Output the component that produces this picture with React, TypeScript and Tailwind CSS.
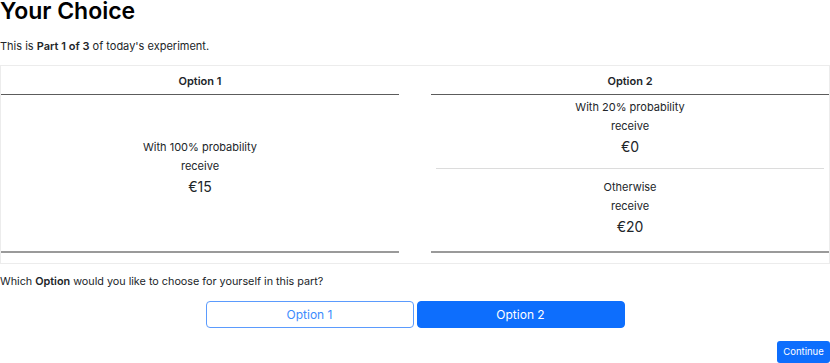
import React from "react";

function Line({ children }: { children: React.ReactNode }) {
  return <div className="text-[11px] leading-[19px]">{children}</div>;
}
function Amount({ children }: { children: React.ReactNode }) {
  return <div className="text-[14px] leading-[22px]">{children}</div>;
}

export default function App() {
  return (
    <div className="w-[830px] h-[363px] bg-white text-[#212529] font-['Inter',sans-serif] overflow-hidden">
      <h1 className="text-[23px] leading-[22px] font-semibold text-black">Your Choice</h1>
      <p className="mt-[15px] text-[11px] leading-[18px]">
        This is <b className="font-semibold">Part 1 of 3</b> of today's experiment.
      </p>
      <div className="mt-[10px] border border-[#ececec] pb-[10px]">
        <div className="grid grid-cols-[398px_398px] gap-x-[32px]">
          <div className="flex flex-col">
            <div className="h-[29px] pt-[2px] flex items-center justify-center text-[11px] font-semibold border-b border-[#5c5c5c]">
              Option 1
            </div>
            <div className="h-[158px] pb-[10px] flex flex-col items-center justify-center text-center border-b-2 border-[#9a9a9a]">
              <Line>With 100% probability</Line>
              <Line>receive</Line>
              <Amount>€15</Amount>
            </div>
          </div>
          <div className="flex flex-col">
            <div className="h-[29px] pt-[2px] flex items-center justify-center text-[11px] font-semibold border-b border-[#5c5c5c]">
              Option 2
            </div>
            <div className="h-[158px] flex flex-col text-center border-b-2 border-[#9a9a9a]">
              <div className="mx-[5px] pt-[3px] pb-[10px] border-b border-[#dcdcdc] flex flex-col items-center">
                <Line>With 20% probability</Line>
                <Line>receive</Line>
                <Amount>€0</Amount>
              </div>
              <div className="pt-[9px] flex flex-col items-center">
                <Line>Otherwise</Line>
                <Line>receive</Line>
                <Amount>€20</Amount>
              </div>
            </div>
          </div>
        </div>
      </div>
      <p className="mt-[9px] text-[10.8px] leading-[18px]">
        Which <b className="font-semibold">Option</b> would you like to choose for yourself in this part?
      </p>
      <div className="mt-[10px] flex justify-center gap-[3px]">
        <button className="w-[208px] h-[27px] rounded-[4px] border border-[#5b9bfd] bg-white text-[#3d8bfd] text-[12px]">
          Option 1
        </button>
        <button className="w-[208px] h-[27px] rounded-[4px] border border-[#0d6efd] bg-[#0d6efd] text-white text-[12px]">
          Option 2
        </button>
      </div>
      <div className="mt-[13px] flex justify-end">
        <button className="w-[53px] h-[22px] rounded-[3px] bg-[#0d6efd] text-white text-[9.5px]">
          Continue
        </button>
      </div>
    </div>
  );
}
